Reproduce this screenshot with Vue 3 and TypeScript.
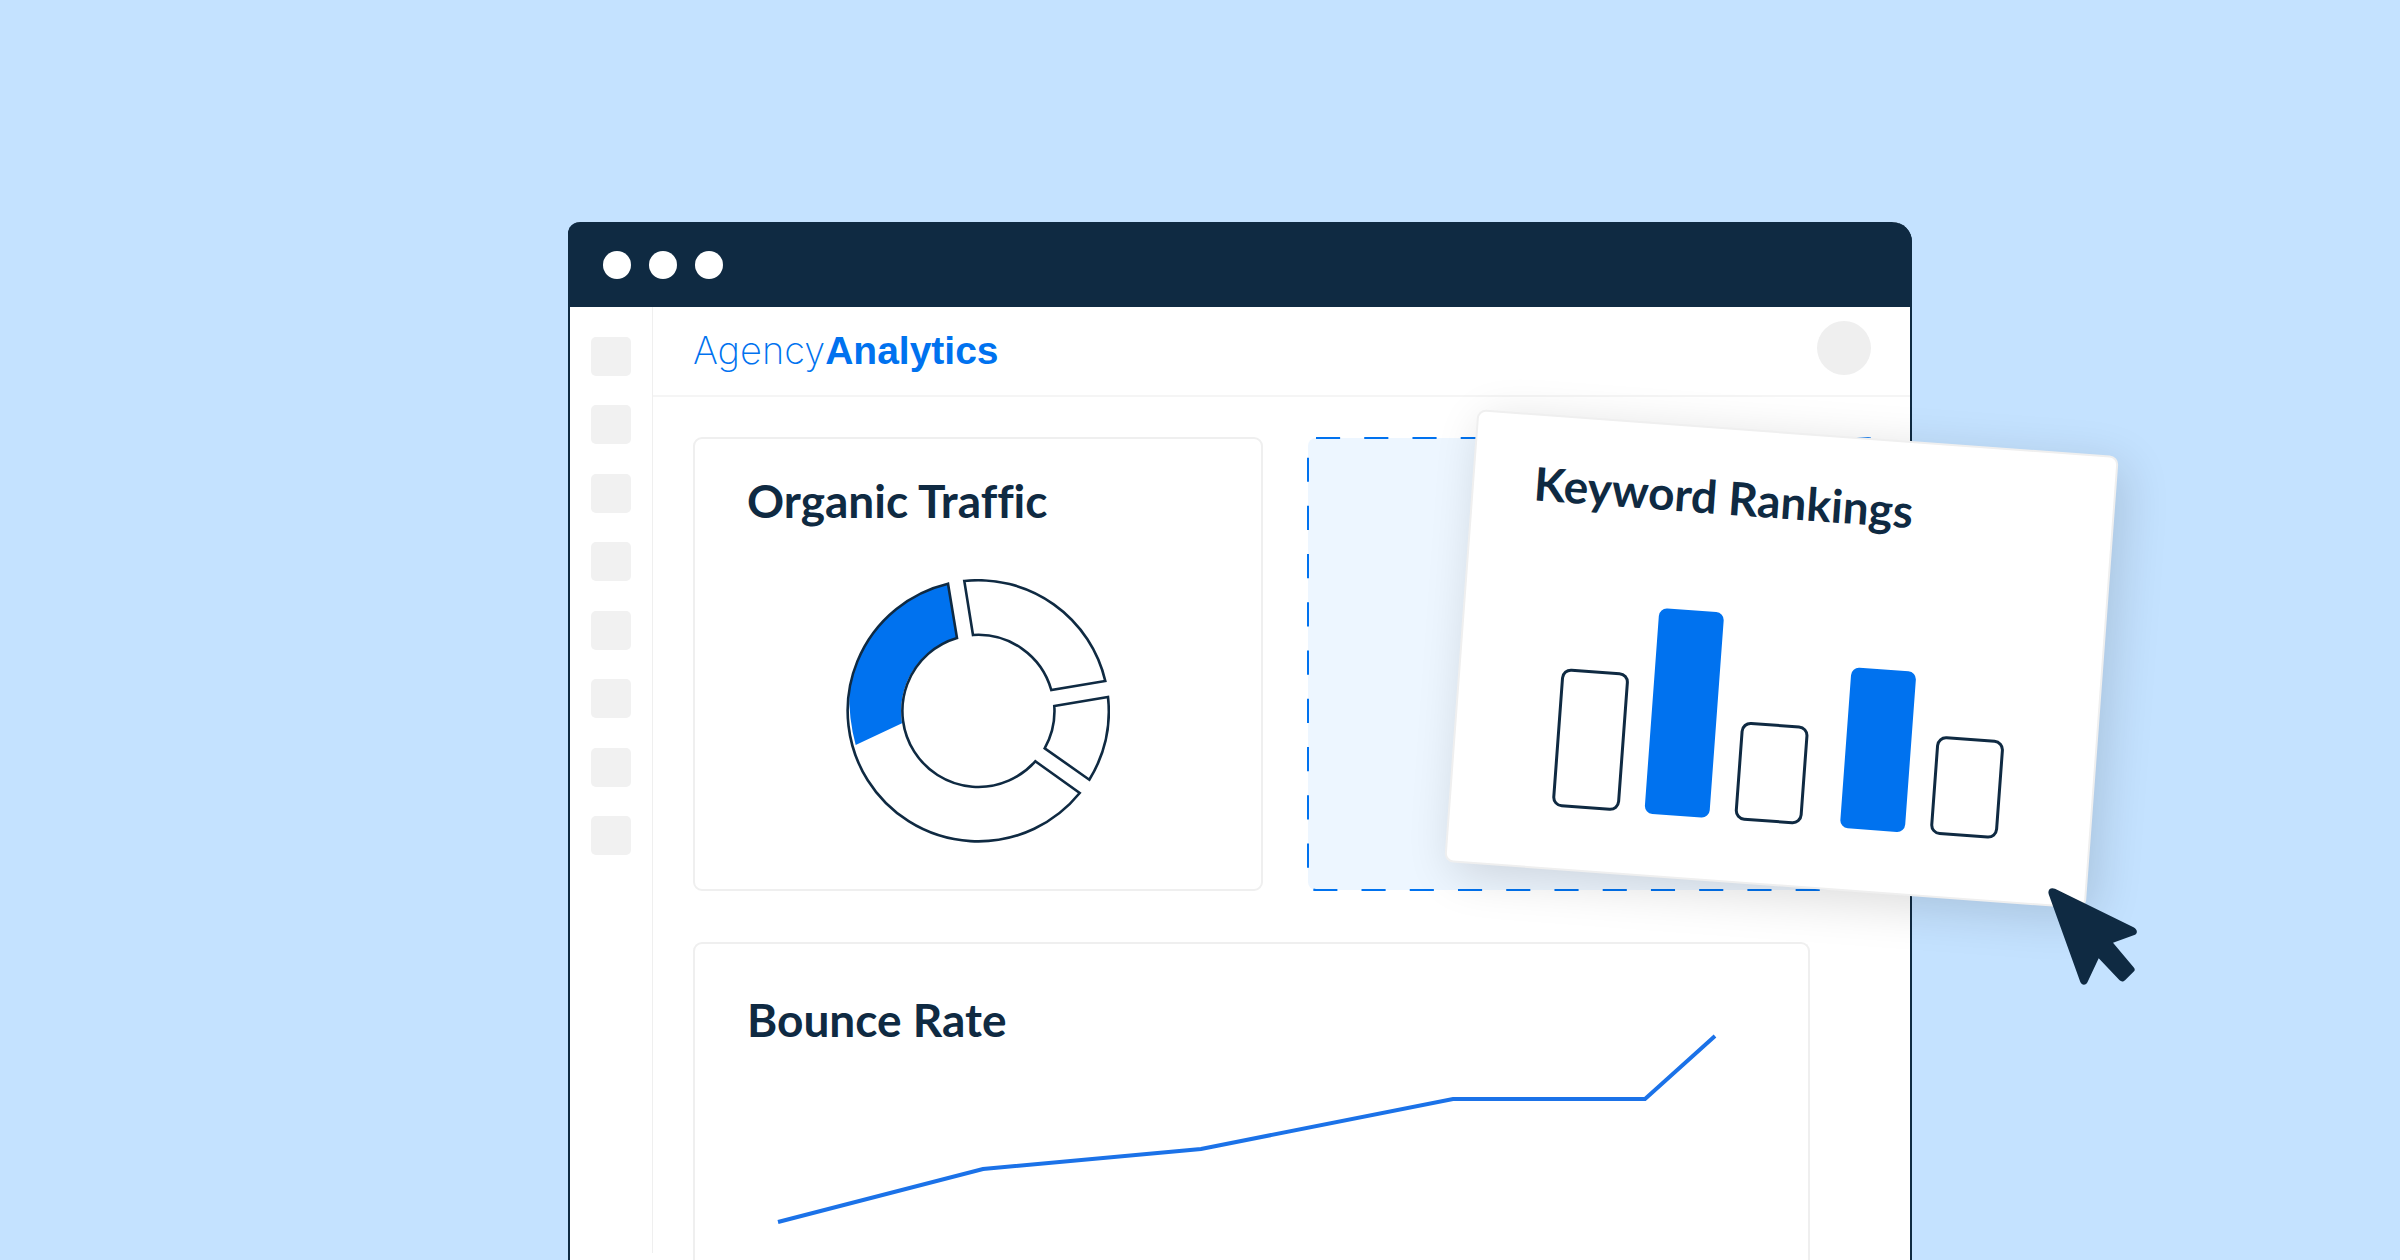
<script setup lang="ts">
interface Bar {
  height: number
  filled: boolean
  spaced?: boolean
}

const navItems: number[] = [1, 2, 3, 4, 5, 6, 7, 8]
const windowControls: string[] = ['Close', 'Minimize', 'Maximize']

const rankings: Bar[] = [
  { height: 139, filled: false },
  { height: 206, filled: true },
  { height: 99, filled: false },
  { height: 161, filled: true, spaced: true },
  { height: 99, filled: false },
]
</script>

<template>
  <div class="page">
    <section class="window">
      <header class="titlebar">
        <button v-for="name in windowControls" :key="name" class="dot" type="button" :aria-label="name"></button>
      </header>

      <div class="body">
        <nav class="sidebar" aria-label="Sections">
          <div class="nav-list">
            <button v-for="n in navItems" :key="n" class="nav-item" type="button" :aria-label="`Section ${n}`"></button>
          </div>
        </nav>

        <div class="main">
          <header class="topbar">
            <a class="logo" href="#"><span class="logo-thin">Agency</span><span class="logo-bold">Analytics</span></a>
            <button class="avatar" type="button" aria-label="Account"></button>
          </header>

          <main class="board">
            <div class="row">
              <article class="card traffic">
                <h2 class="title">Organic Traffic</h2>
                <svg class="donut" viewBox="-132 -132 264 264" role="img" aria-label="Organic traffic by source">
                  <path class="donut-fill" d="M-30 -127.3A130.6 130.6 0 0 0 -128.8 -22Q-129.5 8 -122.3 34L-76 12.3A76 76 0 0 1 -21 -73Z" />
                  <path class="donut-line" d="M-30 -127.3A130.6 130.6 0 1 0 101.7 82L57.3 50.3A76 76 0 1 1 -21 -73Z" />
                  <path class="donut-line" d="M-13.7 -130A130.6 130.6 0 0 1 127.3 -30L73.3 -21A76 76 0 0 0 -5 -76Z" />
                  <path class="donut-line" d="M76.3 -5L130 -14A130.6 130.6 0 0 1 111.3 68.7L66.7 37.3A76 76 0 0 0 76.3 -5Z" />
                </svg>
              </article>

              <div class="slot">
                <svg class="slot-outline" aria-hidden="true">
                  <rect x="1" y="1" rx="8" pathLength="84" />
                </svg>
                <article class="card floating">
                  <h2 class="title">Keyword Rankings</h2>
                  <div class="bars">
                    <span
                      v-for="(bar, i) in rankings"
                      :key="i"
                      class="bar"
                      :class="{ filled: bar.filled, spaced: bar.spaced }"
                      :style="{ height: `${bar.height}px` }"
                    ></span>
                  </div>
                </article>
                <svg class="cursor" viewBox="0 0 89 97" aria-hidden="true">
                  <path
                    d="M.8 6.5C-.8 1.8 2.6-1.2 7 .8L85.5 39.2C89.8 41.4 89.6 45.6 87 46.7L65 54.7L85.6 79.2C87.2 81.2 87 82.3 85.8 83.6L77 92.2C75 94.2 73 93.6 71.6 92.3L50.7 70.3L39.8 93.5C38 97.8 33.8 97.4 32.3 94Z"
                  />
                </svg>
              </div>
            </div>

            <article class="card bounce">
              <h2 class="title">Bounce Rate</h2>
              <svg class="trend" viewBox="2 2 1113 316" role="img" aria-label="Bounce rate over time">
                <polyline points="85,280 290,227 508,207 760,157 952,157 1022,94" />
              </svg>
            </article>
          </main>
        </div>
      </div>
    </section>
  </div>
</template>

<style>
body {
  margin: 0;
  background: #c4e2ff;
}
</style>

<style scoped>
.page {
  --navy: #0f2a42;
  --blue: #0072ef;
  --line: #efefef;
  box-sizing: border-box;
  display: grid;
  grid-template-columns: 568fr 1344fr 488fr;
  min-height: 100vh;
  padding-top: 222px;
  overflow: hidden;
  background: #c4e2ff;
  color: var(--navy);
  font-family: Lato, "Open Sans", sans-serif;
}

.page *,
.page *::before {
  box-sizing: border-box;
}

button {
  padding: 0;
  border: 0;
}

.window {
  grid-column: 2;
  display: flex;
  flex-direction: column;
  border: 2px solid var(--navy);
  border-width: 0 2px;
  border-radius: 12px 20px 0 0;
  background: #fff;
}

.titlebar {
  display: flex;
  align-items: center;
  gap: 18px;
  height: 85px;
  margin: 0 -2px;
  padding-left: 35px;
  border-radius: 12px 20px 0 0;
  background: var(--navy);
}

.dot {
  width: 28px;
  height: 28px;
  border-radius: 50%;
  background: #fff;
}

.body {
  display: flex;
  flex: 1;
}

.sidebar {
  width: 83px;
  margin-bottom: 7px;
  padding: 30px 21px 0;
  border-right: 1px solid var(--line);
}

.nav-list {
  display: flex;
  flex-direction: column;
  justify-content: space-between;
  height: 518px;
}

.nav-item {
  width: 40px;
  height: 39px;
  border-radius: 5px;
  background: #f1f1f1;
}

.main {
  display: flex;
  flex: 1;
  flex-direction: column;
  min-width: 0;
}

.topbar {
  display: flex;
  align-items: center;
  justify-content: space-between;
  height: 90px;
  padding: 0 39px 6px 40px;
  border-bottom: 2px solid #f5f5f5;
}

.logo {
  display: flex;
  align-items: baseline;
  margin-top: 4px;
  color: var(--blue);
  font-size: 39px;
  line-height: 48px;
  text-decoration: none;
}

.logo-thin {
  font-family: Inter, sans-serif;
  font-size: 38px;
  font-weight: 200;
}

.logo-bold {
  font-family: "Liberation Sans", sans-serif;
  font-weight: 700;
}

.avatar {
  width: 54px;
  height: 54px;
  border-radius: 50%;
  background: #efefef;
}

.board {
  display: flex;
  flex: 1;
  flex-direction: column;
  gap: 51px;
  padding: 40px 33px 0 40px;
}

.row {
  display: grid;
  grid-template-columns: 1fr 1fr;
  gap: 44px;
  height: 454px;
}

.card {
  border: 2px solid var(--line);
  border-radius: 9px;
  background: #fff;
}

.title {
  margin: 0;
  font-size: 46px;
  font-weight: 700;
  font-variant-ligatures: none;
  line-height: 56px;
  white-space: nowrap;
}

.traffic {
  display: flex;
  flex-direction: column;
  padding: 34px 52px 0;
}

.donut {
  align-self: center;
  width: 264px;
  height: 264px;
  margin-top: 50px;
}

.donut-fill {
  fill: var(--blue);
}

.donut-line {
  fill: none;
  stroke: var(--navy);
  stroke-width: 2.6;
}

.slot {
  position: relative;
}

.slot-outline {
  display: block;
  width: 100%;
  height: 100%;
}

.slot-outline rect {
  width: calc(100% - 2px);
  height: calc(100% - 2px);
  fill: #edf6ff;
  stroke: var(--blue);
  stroke-width: 2;
  stroke-dasharray: 1 1;
}

.floating {
  position: absolute;
  top: -5px;
  left: 26.8%;
  display: flex;
  flex-direction: column;
  justify-content: space-between;
  width: 112.8%;
  height: 454px;
  padding: 40px 60px 61px;
  box-shadow: 8px 10px 48px rgba(0, 0, 0, 0.14);
  transform: rotate(4.2deg);
}

.bars {
  display: flex;
  align-items: flex-end;
  gap: 25px;
  padding-left: 41px;
}

.bar {
  width: 68px;
  border: 3px solid var(--navy);
  border-radius: 10px;
}

.bar.filled {
  width: 65px;
  border: 0;
  border-radius: 8px;
  background: var(--blue);
}

.bar.spaced {
  margin-left: 13px;
}

.cursor {
  position: absolute;
  top: 451px;
  left: 130%;
  z-index: 2;
  width: 89px;
  height: 97px;
  fill: var(--navy);
}

.bounce {
  position: relative;
  z-index: 1;
  display: grid;
  flex: 1;
  margin-right: 67px;
  border-bottom: 0;
  border-radius: 9px 9px 0 0;
}

.bounce .title {
  grid-area: 1 / 1;
  padding: 48px 52px 0;
}

.trend {
  grid-area: 1 / 1;
  width: 100%;
}

.trend polyline {
  fill: none;
  stroke: #1b72e8;
  stroke-width: 4;
}
</style>
